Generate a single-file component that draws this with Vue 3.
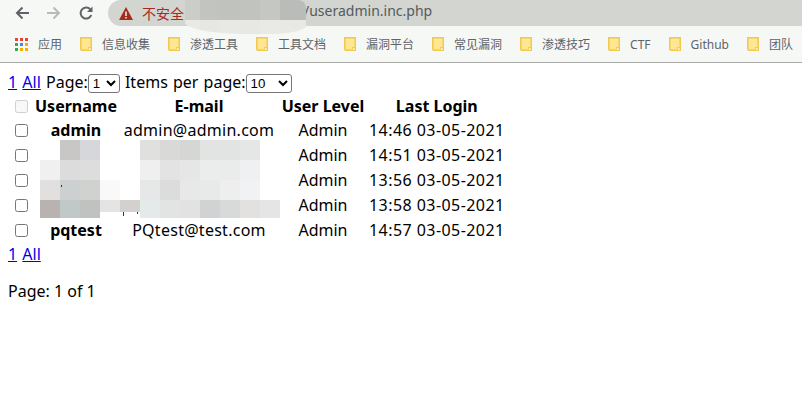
<script setup>
const bookmarks = ['信息收集', '渗透工具', '工具文档', '漏洞平台', '常见漏洞', '渗透技巧', 'CTF', 'Github', '团队']
const rows = [
  { name: 'admin', email: 'admin@admin.com', time: '14:46 03-05-2021' },
  { name: '', email: '', time: '14:51 03-05-2021' },
  { name: '', email: '', time: '13:56 03-05-2021' },
  { name: '', email: '', time: '13:58 03-05-2021' },
  { name: 'pqtest', email: 'PQtest@test.com', time: '14:57 03-05-2021' },
]
const appDots = [
  ['#ea4335', 0, 0], ['#ea4335', 5, 0], ['#ea4335', 10, 0],
  ['#34a853', 0, 5], ['#4285f4', 5, 5], ['#f9ab00', 10, 5],
  ['#34a853', 0, 10], ['#f9ab00', 5, 10], ['#f9ab00', 10, 10],
]
const mosaic = [
  [20, 20, '#c8c7c5', 20], [40, 20, '#d5d7da', 20],
  [100, 20, '#e0e0de', 20], [120, 20, '#d9d9d7', 20], [140, 20, '#d6d6d4', 20], [160, 20, '#e2e3e3', 20], [180, 20, '#e2e3e3', 20], [200, 20, '#e5e6e6', 20],
  [0, 40, '#f0f0f0', 20], [20, 40, '#dcdcdc', 20], [40, 40, '#dddddd', 20],
  [100, 40, '#efefef', 20], [120, 40, '#e3e3e3', 20], [140, 40, '#e6e6e6', 20], [160, 40, '#ebecec', 20], [180, 40, '#eaebeb', 20], [200, 40, '#eff0f2', 20],
  [0, 60, '#e2e0df', 20], [20, 60, '#ccd0d0', 20], [40, 60, '#d0d2d0', 20], [60, 60, '#f9f9f9', 20],
  [100, 60, '#e6e7e7', 20], [120, 60, '#dcdcdc', 20], [140, 60, '#e8e8e8', 20], [160, 60, '#e8eaea', 20], [180, 60, '#eeeeee', 20], [200, 60, '#f1f2f4', 20],
  [0, 80, '#b8b3b0', 18], [20, 80, '#c0c8c8', 18], [40, 80, '#c0c2c2', 18], [60, 80, '#e4e4e4', 12], [80, 80, '#d4d0cd', 12],
  [100, 80, '#e4e9ea', 18], [120, 80, '#e2e3e3', 18], [140, 80, '#e2e2e2', 18], [160, 80, '#d0d2d4', 18], [180, 80, '#d8dada', 18], [200, 80, '#e3e1df', 18], [220, 80, '#e3e5e7', 18],
]
const addressMosaic = [
  [0, 15, '#cbcdc9', '#e9eae6'], [15, 20, '#c2c4c0', '#e6e7e3'], [35, 20, '#c0c2be', '#e8e9e5'],
  [55, 20, '#c1c3bf', '#e7e8e3'], [75, 20, '#c5c7c3', '#e9eae5'], [95, 26, '#babcb9', '#e8e9e4'],
]
const specks = [[21, 65, 1, 2], [83, 92, 1, 4], [97, 92, 1, 2]]
</script>

<template>
  <div class="screen">
    <header class="toolbar">
      <div class="nav">
        <svg class="nav-icon" viewBox="0 0 14 14"><path d="M14 7H2M7.500 1.500 2 7l5.500 5.500" fill="none" stroke="#5f6368" stroke-width="2"/></svg>
        <svg class="nav-icon" viewBox="0 0 14 14"><path d="M0 7h12M6.500 1.500 12 7l-5.500 5.500" fill="none" stroke="#b9bbb9" stroke-width="2"/></svg>
        <svg class="nav-icon" viewBox="0 0 14 14"><path d="M12.300 9A5.500 5.500 0 1 1 11.200 3.300" fill="none" stroke="#5f6368" stroke-width="2"/><path d="M13.500.500v5.500H8z" fill="#5f6368"/></svg>
      </div>
      <div class="address">
        <svg class="warn" viewBox="0 0 14 13"><path d="M7 0 14 13H0z" fill="#a52a1f"/><path d="M6.200 4.500h1.600v4.500H6.200zM6.200 10h1.600v1.600H6.200z" fill="#f2e4df"/></svg>
        <span class="insecure">不安全</span>
        <span class="url">/useradmin.inc.php</span>
        <div class="address-blur">
          <div v-for="m in addressMosaic" :key="m[0]" class="address-cell" :style="{ width: m[1] + 'px', background: `linear-gradient(${m[2]} 20px, ${m[3]} 20px)` }"></div>
        </div>
      </div>
    </header>
    <nav class="bookmarks">
      <div class="bookmark">
        <svg class="apps-icon" viewBox="0 0 13 13"><rect v-for="(d, i) in appDots" :key="i" :x="d[1]" :y="d[2]" width="3" height="3" :fill="d[0]"/></svg>
        <span>应用</span>
      </div>
      <div v-for="b in bookmarks" :key="b" class="bookmark">
        <svg class="folder" viewBox="0 0 12 14"><path d="M.750.750h10.500v12.500H2Q.750 13.250.750 12z" fill="#ffe692" stroke="#f0c94e" stroke-width="1.500"/><rect x="8.500" y="10.500" width="2.500" height="3" fill="#fff3c4" stroke="#f0c94e" stroke-width=".8"/></svg>
        <span>{{ b }}</span>
      </div>
    </nav>
    <main class="page">
      <div class="pager">
        <a href="#">1</a> <a href="#">All</a> Page:<select class="sel-page"><option>1</option></select>
        Items per page:<select class="sel-items"><option>10</option></select>
      </div>
      <div class="table-wrap">
        <table>
          <thead>
            <tr>
              <th><input type="checkbox" disabled /></th>
              <th class="col-name">Username</th>
              <th class="col-mail">E-mail</th>
              <th class="col-level">User Level</th>
              <th class="col-login">Last Login</th>
            </tr>
          </thead>
          <tbody>
            <tr v-for="(r, i) in rows" :key="i">
              <td><input type="checkbox" /></td>
              <td class="user">{{ r.name }}</td>
              <td class="mail">{{ r.email }}</td>
              <td>Admin</td>
              <td class="time">{{ r.time }}</td>
            </tr>
          </tbody>
        </table>
        <div class="blur">
          <div class="blob blob-a"></div>
          <div class="blob blob-b"></div>
          <div class="blob blob-c"></div>
          <i v-for="(m, i) in mosaic" :key="i" :style="{ left: m[0] + 'px', top: m[1] + 'px', height: m[3] + 'px', background: m[2] }"></i>
          <b v-for="(s, i) in specks" :key="'s' + i" class="speck" :style="{ left: s[0] + 'px', top: s[1] + 'px', width: s[2] + 'px', height: s[3] + 'px' }"></b>
        </div>
      </div>
      <div class="pager-bottom"><a href="#">1</a> <a href="#">All</a></div>
      <p class="count">Page: 1 of 1</p>
    </main>
  </div>
</template>

<style scoped>
.screen {
  width: 802px;
  height: 418px;
  overflow: hidden;
  background: #fff;
  color: #000;
  font-family: "Noto Sans", "Noto Sans CJK SC", sans-serif;
}
.toolbar {
  height: 26px;
  display: flex;
  background: #f6f8f5;
}
.nav {
  width: 108px;
  flex: none;
  display: flex;
  align-items: center;
  gap: 18px;
  padding-left: 15px;
  box-sizing: border-box;
}
.nav-icon {
  width: 14px;
  height: 14px;
  flex: none;
}
.address {
  flex: 1;
  position: relative;
  display: flex;
  align-items: center;
  background: #d2d5d0;
  border-radius: 13px 0 0 13px;
  padding-left: 11px;
}
.warn {
  width: 14px;
  height: 13px;
  margin-right: 9px;
}
.insecure {
  color: #a52a1f;
  font-size: 14px;
}
.url {
  position: absolute;
  left: 196px;
  top: 0;
  color: #555a5e;
  font-size: 14px;
  line-height: 22px;
}
.address-blur {
  position: absolute;
  left: 77px;
  top: 0;
  display: flex;
  width: 121px;
  height: 34px;
  overflow: hidden;
  border-radius: 2px 8px 40px 60px / 2px 8px 8px 12px;
  z-index: 2;
}
.address-cell {
  flex: none;
  height: 34px;
}
.bookmarks {
  height: 37px;
  box-sizing: border-box;
  display: flex;
  align-items: center;
  gap: 18px;
  padding-left: 15px;
  background: #f6f8f5;
  border-bottom: 1px solid #a9aaa8;
  font-size: 12px;
  color: #5f6368;
}
.bookmark {
  display: flex;
  align-items: center;
  gap: 10px;
}
.apps-icon {
  width: 13px;
  height: 13px;
}
.folder {
  width: 12px;
  height: 14px;
}
.page {
  padding: 8px;
  font-size: 16px;
}
.pager {
  height: 22px;
  line-height: 22px;
  white-space: nowrap;
  word-spacing: 1px;
}
select {
  font: 13.300px "Liberation Sans", Arial, sans-serif;
  height: 19px;
  padding: 0;
  box-sizing: border-box;
  border: 1px solid #767676;
  border-radius: 3px;
  background: #fff;
}
.sel-page { width: 32px; }
.sel-items { width: 46px; }
.table-wrap {
  position: relative;
}
table {
  border-collapse: separate;
  border-spacing: 2px;
}
th, td {
  padding: 1px;
  text-align: center;
}
th {
  height: 20px;
  line-height: 20px;
}
td {
  height: 21px;
  line-height: 21px;
}
input[type="checkbox"] {
  display: block;
  margin: 4px 3px 4px 4px;
}
th input[type="checkbox"] {
  margin: 4px 3px 3px 4px;
}
.col-name { min-width: 82px; }
.col-mail { min-width: 156px; }
.col-level { min-width: 84px; }
.col-login { min-width: 134px; }
.user { font-weight: 700; }
.mail { letter-spacing: .27px; }
.time { letter-spacing: .44px; }
.blur {
  position: absolute;
  left: 32px;
  top: 27px;
  width: 240px;
  height: 100px;
  pointer-events: none;
}
.blur i {
  position: absolute;
  width: 20px;
}
.blob {
  position: absolute;
  background: #fff;
}
.blob-a { left: -2px; top: 20px; width: 62px; height: 78px; border-radius: 18px; }
.blob-b { left: 98px; top: 18px; width: 124px; height: 80px; border-radius: 16px; }
.blob-c { left: -7px; top: 68px; width: 260px; height: 32px; border-radius: 14px; }
.speck {
  position: absolute;
  background: #333;
}
.pager-bottom {
  line-height: 20px;
  word-spacing: 1px;
}
.count {
  margin: 16px 0;
  line-height: 22px;
}
</style>
